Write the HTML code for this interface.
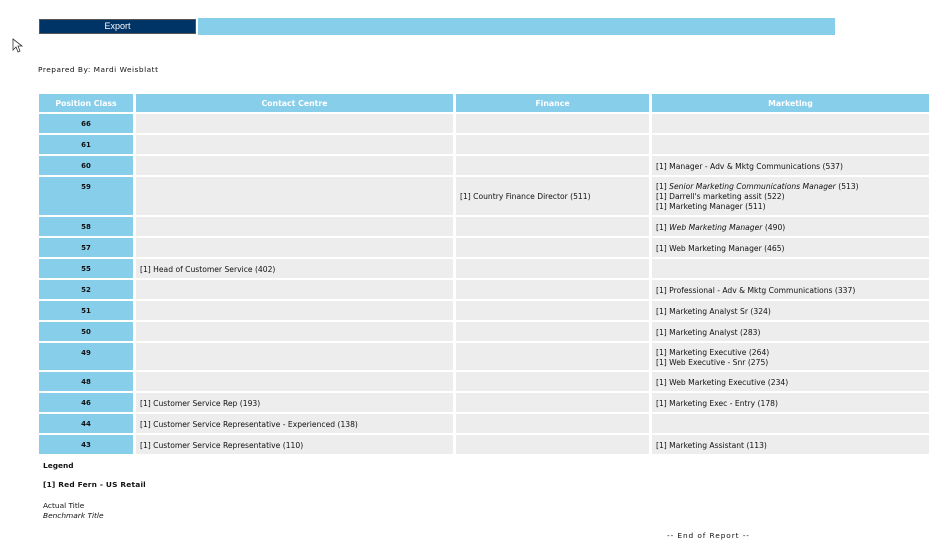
<!DOCTYPE html><html><head><style>
body{margin:0;width:929px;height:545px;background:#fff;position:relative;overflow:hidden;font-family:"DejaVu Sans",Verdana,sans-serif;font-size:7.6px;color:#111}
.a{position:absolute}
.pc{position:absolute;left:39px;width:94px;background:#87ceeb;text-align:center;font-weight:bold;font-size:7px}
.c{position:absolute;background:#ededed}
.h{position:absolute;top:94px;height:18px;background:#87ceeb;color:#fff;font-weight:bold;text-align:center;line-height:19px;font-size:7.8px}
.t{position:absolute;line-height:10px;white-space:nowrap}
</style></head><body>
<div class="a" style="left:39px;top:19px;width:157px;height:15px;background:#003366;border:1px solid #555;box-sizing:border-box;color:#fff;font-family:'Liberation Sans',sans-serif;font-size:9px;text-align:center;line-height:13px">Export</div>
<div class="a" style="left:198px;top:18px;width:637px;height:17px;background:#87ceeb"></div>
<svg class="a" style="left:12px;top:38px" width="12" height="16"><path d="M1 1 L1 12 L4 9 L6 14 L8 13 L6 8 L10 8 Z" fill="#fff" stroke="#333" stroke-width="0.8"/></svg>
<div class="t" style="left:38px;top:65px;font-size:7.4px;letter-spacing:0.5px">Prepared By: Mardi Weisblatt</div>
<div class="h" style="left:39px;width:94px">Position Class</div>
<div class="h" style="left:136px;width:317px">Contact Centre</div>
<div class="h" style="left:456px;width:193px">Finance</div>
<div class="h" style="left:652px;width:277px">Marketing</div>
<div id="rows"></div>
<script>
var R=[[66,114,19,'','',''],[61,135,19,'','',''],[60,156,19,'','','[1] Manager - Adv &amp; Mktg Communications (537)'],
[59,177,38,'','[1] Country Finance Director (511)','[1] <i>Senior Marketing Communications Manager</i> (513)<br>[1] Darrell\'s marketing assit (522)<br>[1] Marketing Manager (511)'],
[58,217,19,'','','[1] <i>Web Marketing Manager</i> (490)'],[57,238,19,'','','[1] Web Marketing Manager (465)'],
[55,259,19,'[1] Head of Customer Service (402)','',''],[52,280,19,'','','[1] Professional - Adv &amp; Mktg Communications (337)'],
[51,301,19,'','','[1] Marketing Analyst Sr (324)'],[50,322,19,'','','[1] Marketing Analyst (283)'],
[49,343,27,'','','[1] Marketing Executive (264)<br>[1] Web Executive - Snr (275)'],[48,372,19,'','','[1] Web Marketing Executive (234)'],
[46,393,19,'[1] Customer Service Rep (193)','','[1] Marketing Exec - Entry (178)'],[44,414,19,'[1] Customer Service Representative - Experienced (138)','',''],
[43,435,19,'[1] Customer Service Representative (110)','','[1] Marketing Assistant (113)']];
var cols=[[136,317],[456,193],[652,277]],h='';
R.forEach(function(r){h+='<div class="pc" style="top:'+r[1]+'px;height:'+r[2]+'px;line-height:21px">'+r[0]+'</div>';
for(var i=0;i<3;i++){var tx=r[3+i],n=(tx.match(/<br>/g)||[]).length+1;
h+='<div class="c" style="left:'+cols[i][0]+'px;width:'+cols[i][1]+'px;top:'+r[1]+'px;height:'+r[2]+'px"><div class="t" style="left:4px;top:'+((r[2]-n*10)/2+1)+'px">'+tx+'</div></div>';}});
document.getElementById('rows').innerHTML=h;
</script>
<div class="t" style="left:43px;top:461px;font-weight:bold;font-size:7.4px">Legend</div>
<div class="t" style="left:43px;top:480px;font-weight:bold;font-size:7.4px;letter-spacing:0.2px">[1] Red Fern - US Retail</div>
<div class="t" style="left:43px;top:501px;font-size:7.4px">Actual Title<br><i>Benchmark Title</i></div>
<div class="t" style="left:667px;top:531px;font-size:7.4px;letter-spacing:0.9px">-- End of Report --</div>
</body></html>
